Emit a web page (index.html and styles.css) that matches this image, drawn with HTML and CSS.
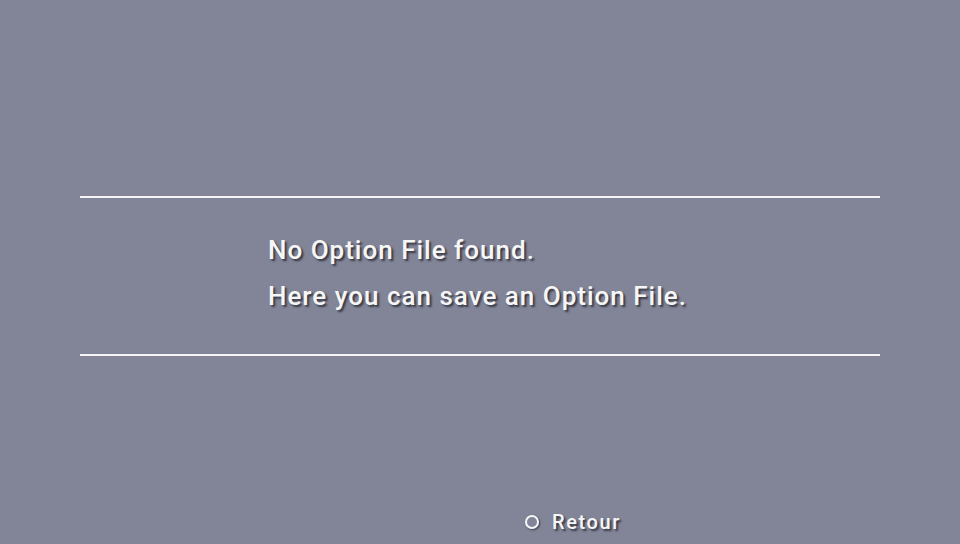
FILE: index.html
```html
<!DOCTYPE html>
<html>
<head>
<meta charset="utf-8">
<link rel="stylesheet" href="styles.css">
</head>
<body>
<div class="screen">
  <div class="panel">
    <p class="msg">No Option File found.</p>
    <p class="msg">Here you can save an Option File.</p>
  </div>
  <div class="footer">
    <span class="btn"><span class="circle"></span><span class="label">Retour</span></span>
  </div>
</div>
</body>
</html>
```

FILE: styles.css
```css
html, body {
  margin: 0;
  padding: 0;
  width: 960px;
  height: 544px;
  overflow: hidden;
  background: #818597;
}
.screen {
  width: 960px;
  height: 544px;
  display: flex;
  flex-direction: column;
  font-family: "Roboto", "Liberation Sans", sans-serif;
  color: #f6f6f6;
  text-shadow: 2px 2px 2px rgba(30, 30, 40, 0.75);
}
.panel {
  margin: 196px 0 0 80px;
  width: 800px;
  height: 160px;
  box-sizing: border-box;
  border-top: 2px solid #f4f4f6;
  border-bottom: 2px solid #f4f4f6;
  padding: 29px 0 0 188px;
  display: flex;
  flex-direction: column;
}
.msg {
  margin: 0;
  font-size: 26px;
  font-weight: 500;
  line-height: 46px;
  height: 46px;
  letter-spacing: 1px;
}
.footer {
  padding: 0 0 0 525px;
  margin-top: 154px;
  display: flex;
}
.btn {
  display: flex;
  align-items: center;
  gap: 13px;
}
.circle {
  width: 10px;
  height: 10px;
  border: 2.5px solid #f6f6f6;
  border-radius: 50%;
  box-shadow: 1px 1px 2px rgba(30, 30, 40, 0.7);
}
.label {
  font-size: 20px;
  font-weight: 500;
  letter-spacing: 1.6px;
}
```
